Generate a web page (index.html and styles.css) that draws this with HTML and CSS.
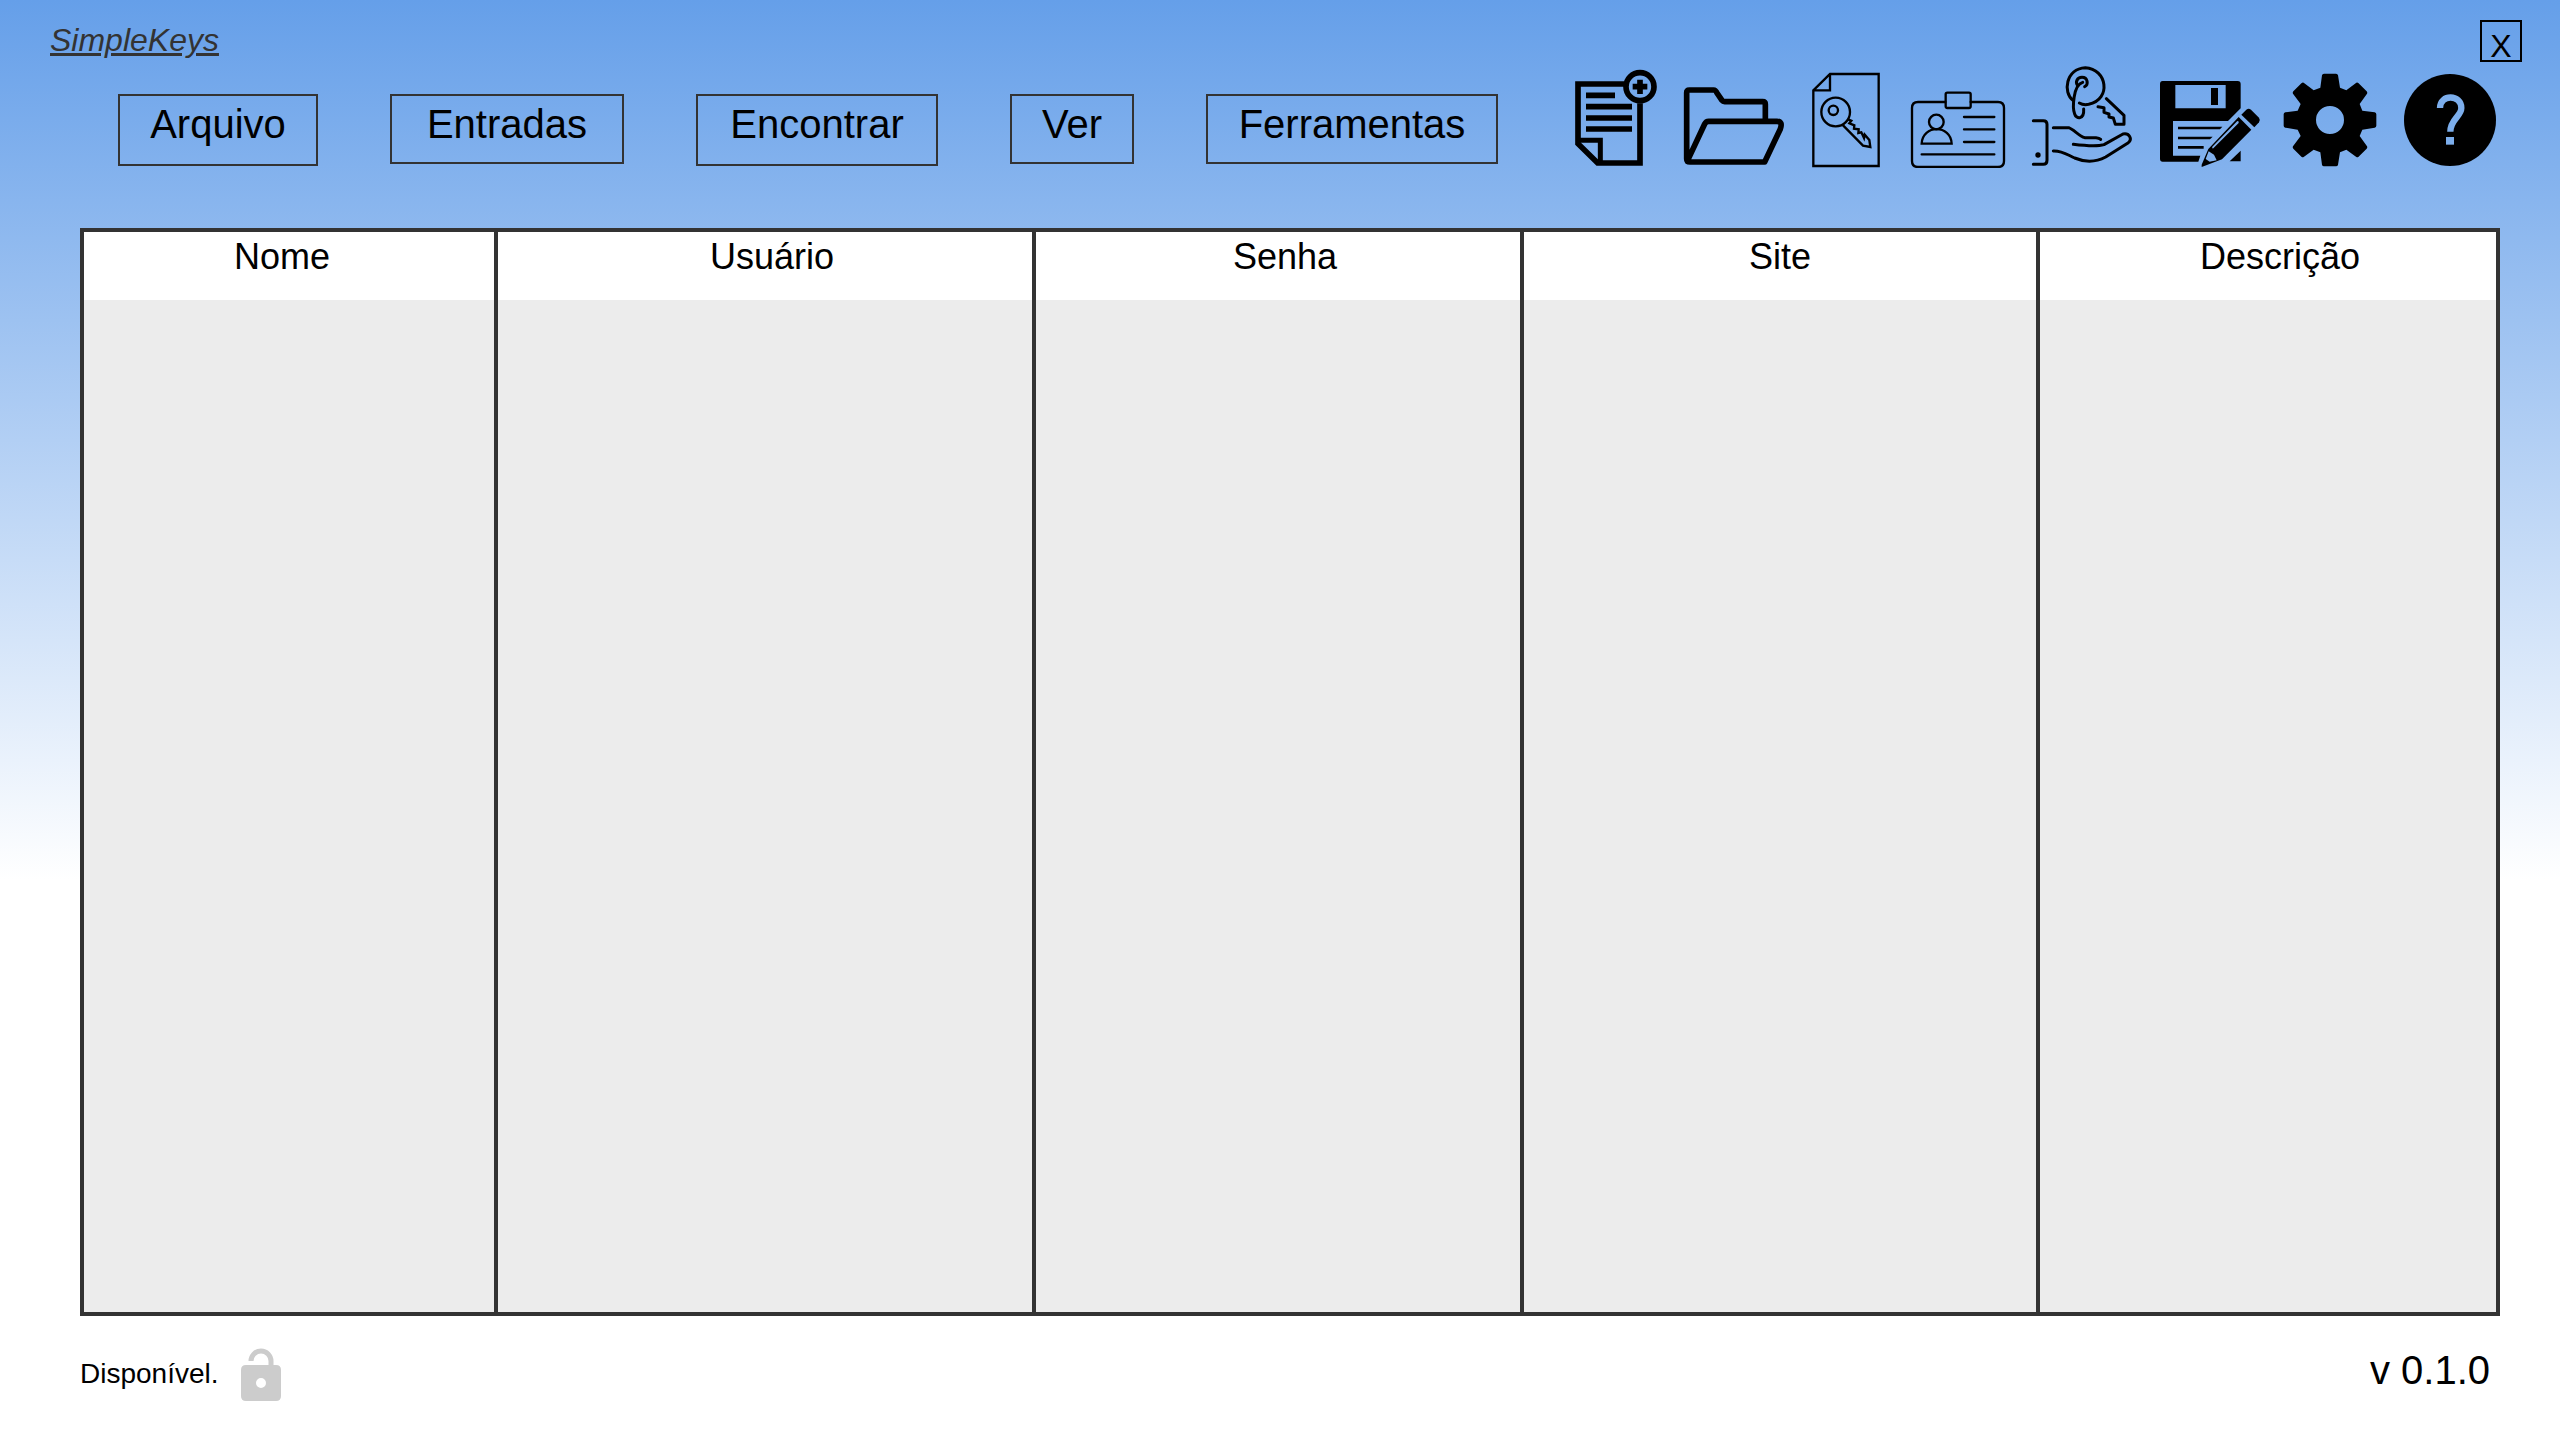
FILE: index.html
```html
<!DOCTYPE html>
<html lang="pt-BR">
<head>
<meta charset="utf-8">
<title>SimpleKeys</title>
<link rel="stylesheet" href="styles.css">
</head>
<body>
<div class="app">
  <header class="titlebar">
    <h1 class="brand">SimpleKeys</h1>
    <button class="close" type="button">X</button>
  </header>
  <div class="toolbar">
    <nav class="menu">
      <button class="menu-button menu-button--tall menu-button--arquivo" type="button">Arquivo</button>
      <button class="menu-button menu-button--entradas" type="button">Entradas</button>
      <button class="menu-button menu-button--tall menu-button--encontrar" type="button">Encontrar</button>
      <button class="menu-button menu-button--ver" type="button">Ver</button>
      <button class="menu-button menu-button--ferramentas" type="button">Ferramentas</button>
    </nav>
    <div class="actions">
      <button class="action" type="button" aria-label="Novo">
        <svg width="88" height="104" viewBox="42 42 264 312">
          <g fill="none" stroke="#000" stroke-width="17">
            <path d="M192 102H54V281L113 339H240V160"/>
            <path stroke-width="15" d="M54 271H121V339"/>
            <path d="M78 136H165M78 170H216M78 204H216M78 237H216"/>
            <circle cx="240" cy="110" r="42"/>
            <path d="M218 110H262M240 89V132"/>
          </g>
        </svg>
      </button>
      <button class="action" type="button" aria-label="Abrir">
        <svg width="108" height="104" viewBox="366 42 324 312">
          <path fill="none" stroke="#000" stroke-width="17" stroke-linejoin="round" d="M616 212V163Q616 155 608 155H494Q489 155 486 151L471 129Q467 120 461 120H388Q380 120 380 128V326Q380 336 390 336H614L661 237Q669 214 651 214H446Q438 214 434 222L384 329"/>
        </svg>
      </button>
      <button class="action" type="button" aria-label="Arquivo de chave">
        <svg width="76" height="104" viewBox="30 42 228 312">
          <g fill="none" stroke="#000" stroke-width="7">
            <path d="M40 121L90 72H236V348H40ZM40 121H90V72"/>
            <circle cx="107" cy="186" r="43"/>
            <circle cx="100" cy="181" r="14"/>
            <path d="M127 224L189 287L211 291L208 270L194 254L192 264L184 247L175 249L176 238L162 236L163 226L148 220L154 212L144 208"/>
          </g>
        </svg>
      </button>
      <button class="action" type="button" aria-label="Identidade">
        <svg width="104" height="104" viewBox="318 42 312 312">
          <g fill="none" stroke="#000" stroke-width="7" stroke-linecap="round">
            <path d="M436 156H354Q336 156 336 174V333Q336 351 354 351H594Q612 351 612 333V174Q612 156 594 156H512"/>
            <rect x="437" y="128" width="75" height="46" rx="5"/>
            <circle cx="409" cy="216" r="22"/>
            <path d="M365 281C367 223 453 223 455 281Z"/>
            <path d="M492 201H583M492 238H583M492 276H583M365 313H583"/>
          </g>
        </svg>
      </button>
      <button class="action" type="button" aria-label="Compartilhar chave">
        <svg width="108" height="104" viewBox="30 42 324 312">
          <g fill="none" stroke="#000" stroke-width="9" stroke-linecap="round" stroke-linejoin="round">
            <path d="M40 212H70Q81 212 81 223V331Q81 343 70 343H40"/>
            <path d="M100 233H146C161 238 177 258 194 263H228Q238 264 242 268"/>
            <path d="M160 283C192 287 232 290 252 284L309 252C328 248 338 267 325 278L257 321C225 338 190 335 164 324C138 312 126 302 100 303"/>
            <path d="M159 151C128 128 137 56 196 53C261 56 276 148 206 163Q190 166 178 159"/>
            <path d="M194 110C206 105 204 82 186 82C171 82 165 97 173 107M188 97C159 105 157 174 164 192C169 209 193 209 191 177"/>
            <path d="M259 146L312 196V223H286L280 204L267 201V192L252 187V173L234 170"/>
          </g>
          <circle cx="54" cy="315" r="8"/>
        </svg>
      </button>
      <button class="action" type="button" aria-label="Salvar">
        <svg width="104" height="104" viewBox="414 42 312 312">
          <path fill-rule="evenodd" d="M428 93H653Q662 93 662 102V175L624 213H459V317H541L535 335H428Q420 335 420 326V102Q420 93 428 93ZM466 105V175H617V105ZM573 114H594V165H573ZM662 302V334H629Z"/>
          <path d="M474 230H607L600 238H474ZM474 260H578L570 268H474ZM474 288H551V296H474Z"/>
          <path fill-rule="evenodd" d="M656 201L694 239L606 328L545 351V344L565 297ZM566 304L557 327L569 335L590 331L582 314ZM577 290Q575 296 580 295L656 219Q658 213 652 213Z"/>
          <path d="M664 194L679 179Q686 173 693 179L717 203Q722 210 717 217L703 232Z"/>
        </svg>
      </button>
      <button class="action" type="button" aria-label="Configurações">
        <svg width="100" height="104" viewBox="36 42 300 312">
          <path fill-rule="evenodd" d="M162 71H198Q203 71 204 76L210 113L229 121L259 98Q262 96 265 99L290 124Q293 127 291 131L269 162L277 182L314 187Q319 188 319 193V227Q319 232 314 233L277 239L269 258L291 289Q293 293 290 296L265 321Q262 323 259 321L229 299L210 307L204 344Q203 349 198 349H162Q157 349 156 344L151 307L131 299L101 321Q98 323 95 321L70 296Q67 293 69 289L92 258L83 239L46 233Q41 232 41 227V193Q41 188 46 187L83 182L92 162L69 131Q67 127 70 124L95 99Q98 96 101 98L131 121L151 113L156 76Q157 71 162 71ZM180 168A42 42 0 1 0 180 252A42 42 0 1 0 180 168Z"/>
        </svg>
      </button>
      <button class="action" type="button" aria-label="Ajuda">
        <svg width="96" height="104" viewBox="396 42 288 312">
          <circle cx="540" cy="210" r="138"/>
          <path fill="none" stroke="#7caeec" stroke-width="19" d="M510 174C510 131 574 133 574 174C574 199 541 208 541 245"/>
          <path fill="#7caeec" d="M528 261H552V284H528Z"/>
        </svg>
      </button>
    </div>
  </div>
  <main class="content">
    <table class="entries">
      <colgroup>
        <col class="col-nome"><col class="col-usuario"><col class="col-senha"><col class="col-site"><col>
      </colgroup>
      <thead>
        <tr><th class="head-nome">Nome</th><th class="head-usuario">Usuário</th><th class="head-senha">Senha</th><th>Site</th><th class="head-descricao">Descrição</th></tr>
      </thead>
      <tbody>
        <tr><td></td><td></td><td></td><td></td><td></td></tr>
      </tbody>
    </table>
  </main>
  <footer class="statusbar">
    <div class="status">
      <span>Disponível.</span>
      <svg width="40" height="54" viewBox="0 0 40 54" aria-hidden="true">
        <path fill="#ccc" fill-rule="evenodd" d="M5 17H27.500V13A7.500 7.500 0 0 0 12.500 13H7.500A12.500 12.500 0 0 1 32.500 13V17H35Q40 17 40 22V48Q40 53 35 53H5Q0 53 0 48V22Q0 17 5 17ZM20 30A5 5 0 1 0 20 40A5 5 0 1 0 20 30Z"/>
      </svg>
    </div>
    <span class="version">v 0.1.0</span>
  </footer>
</div>
</body>
</html>
```
FILE: styles.css
```css
* {
  box-sizing: border-box;
}

body {
  margin: 0;
  font-family: "Liberation Sans", Arial, sans-serif;
  color: #000;
}

button {
  margin: 0;
  padding: 0;
  border: 0;
  background: none;
  font: inherit;
  color: inherit;
}

.app {
  display: flex;
  flex-direction: column;
  min-height: 100vh;
  background: linear-gradient(#659fe9, #fff 880px);
}

.titlebar {
  display: flex;
  justify-content: space-between;
  height: 64px;
  padding: 20px 38px 0 50px;
}

.brand {
  margin: 0;
  font-size: 32px;
  line-height: 40px;
  font-weight: 400;
  font-style: italic;
  text-decoration: underline;
  color: #333;
}

.close {
  width: 42px;
  height: 42px;
  border: 2px solid #000;
  padding-top: 8px;
  font-size: 32px;
  line-height: 32px;
}

.toolbar {
  display: flex;
  justify-content: space-between;
  align-items: flex-start;
  height: 164px;
  padding: 0 62px 0 118px;
}

.menu {
  display: flex;
  align-items: flex-start;
  gap: 72px;
  padding-top: 30px;
}

.menu-button {
  height: 70px;
  border: 2px solid #333;
  padding-bottom: 10px;
  font-size: 40px;
  line-height: 48px;
}

.menu-button--tall {
  height: 72px;
  padding-bottom: 12px;
}

.menu-button--arquivo {
  width: 200px;
}

.menu-button--entradas {
  width: 234px;
}

.menu-button--encontrar {
  width: 242px;
}

.menu-button--ver {
  width: 124px;
}

.menu-button--ferramentas {
  width: 292px;
}

.actions {
  display: flex;
  gap: 20px;
}

.action svg {
  display: block;
}

.content {
  flex: 1;
  display: flex;
  padding: 0 60px 0 80px;
}

.entries {
  width: 100%;
  border: 4px solid #333;
  border-spacing: 0;
  table-layout: fixed;
  background: #ececec;
}

.col-nome {
  width: 414px;
}

.col-usuario {
  width: 538px;
}

.col-senha {
  width: 488px;
}

.col-site {
  width: 516px;
}

.entries th,
.entries td {
  padding: 0;
  border-right: 4px solid #333;
}

.entries th:last-child,
.entries td:last-child {
  border-right: 0;
}

.entries th {
  height: 68px;
  padding-top: 5px;
  background: #fff;
  font-size: 36px;
  line-height: 40px;
  font-weight: 400;
  vertical-align: top;
}

.entries .head-nome {
  padding-right: 14px;
}

.entries .head-usuario,
.entries .head-senha {
  padding-left: 14px;
}

.entries .head-descricao {
  padding-left: 24px;
}

.statusbar {
  display: flex;
  justify-content: space-between;
  height: 124px;
  padding: 32px 70px 0 80px;
}

.status {
  display: flex;
  align-items: flex-start;
  gap: 22px;
  font-size: 28px;
}

.status span {
  line-height: 52px;
}

.version {
  font-size: 40px;
  line-height: 44px;
}
```
